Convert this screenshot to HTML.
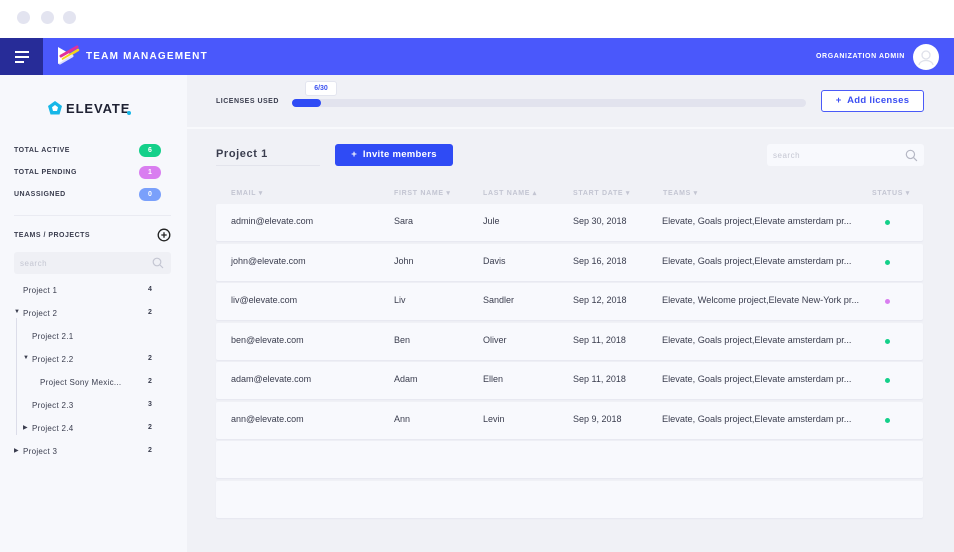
<!DOCTYPE html>
<html><head><meta charset="utf-8"><style>
*{box-sizing:border-box;margin:0;padding:0}
body{width:954px;height:552px;overflow:hidden;background:#fff;font-family:"Liberation Sans",sans-serif;position:relative;color:#3a3d4e}
.a{position:absolute}
.dot{position:absolute;top:11px;width:13px;height:13px;border-radius:50%;background:#e3e4f0}
.hdr{top:38px;left:0;width:954px;height:37px;background:#4a58fb}
.ham{top:38px;left:0;width:43px;height:37px;background:#272c98}
.side{top:75px;left:0;width:187px;height:477px;background:#f7f8fc}
.main{top:75px;left:187px;width:767px;height:477px;background:#f0f1f6}
.lbl{font-size:7px;font-weight:bold;letter-spacing:.5px;color:#3a3d4e}
.pill{width:22px;height:13px;border-radius:7px;color:#fff;font-size:7px;font-weight:bold;text-align:center;line-height:13px}
.tree{font-size:8px;color:#3a3d4e;letter-spacing:.3px}
.cnt{font-size:7px;font-weight:bold;color:#3a3d4e}
.th{font-size:7px;font-weight:bold;color:#c3c5d2;letter-spacing:.7px;top:189px}
.row{left:216px;width:707px;height:37px;background:#f8f9fd;border-radius:2px;box-shadow:0 1px 1px #e6e7f0}
.row span{position:absolute;top:12px;font-size:9px;color:#3a3d4e;white-space:nowrap}
.row span.t{font-size:9.2px}
.st{width:5px;height:5px;border-radius:50%;top:16px;left:669px}
</style></head><body>
<div class="dot" style="left:17px"></div><div class="dot" style="left:41px"></div><div class="dot" style="left:63px"></div>
<div class="a hdr"></div>
<div class="a ham"></div>
<div class="a" style="left:15px;top:51px;width:14px;height:2px;background:#fff"></div>
<div class="a" style="left:15px;top:56px;width:14px;height:2px;background:#fff"></div>
<div class="a" style="left:15px;top:61px;width:9px;height:2px;background:#fff"></div>
<svg class="a" style="left:55px;top:44px" width="26" height="24" viewBox="0 0 26 24"><path d="M3 3 L17 11 L3 20 Z" fill="#fff"/><path d="M6 12 L22 3" stroke="#e2319a" stroke-width="3" stroke-linecap="round"/><path d="M8 15 L23 6" stroke="#f5d31c" stroke-width="2.5" stroke-linecap="round"/><path d="M5 19 L17 12" stroke="#fff" stroke-width="3" stroke-linecap="round" opacity=".8"/></svg>
<div class="a" style="left:86px;top:51px;color:#fff;font-size:10px;font-weight:bold;letter-spacing:1.2px">TEAM MANAGEMENT</div>
<div class="a" style="left:816px;top:53px;color:#fff;font-size:7px;font-weight:bold;letter-spacing:.6px">ORGANIZATION ADMIN</div>
<div class="a" style="left:913px;top:44px;width:26px;height:26px;border-radius:50%;background:#fff"></div>
<svg class="a" style="left:917px;top:48px" width="18" height="18" viewBox="0 0 18 18"><circle cx="9" cy="7" r="4" fill="none" stroke="#dfe1ea" stroke-width="1.3"/><path d="M2 17 C3 11 15 11 16 17" fill="none" stroke="#dfe1ea" stroke-width="1.3"/></svg>

<div class="a side"></div>
<div class="a main"></div>
<div class="a" style="left:187px;top:127px;width:767px;height:2px;background:#f8f9fc"></div>

<svg class="a" style="left:47px;top:100px" width="16" height="16" viewBox="0 0 16 16"><path d="M8 1 L15 6 L12.5 14.5 L3.5 14.5 L1 6 Z" fill="#16b7e8"/><path d="M8 5 L11 7.3 L10 11 L6 11 L5 7.3 Z" fill="#fff"/></svg>
<div class="a" style="left:66px;top:101px;font-size:13px;font-weight:bold;letter-spacing:.9px;color:#1f2233">ELEVATE</div>
<div class="a" style="left:127px;top:111px;width:4px;height:4px;border-radius:50%;background:#16b7e8"></div>

<div class="a lbl" style="left:14px;top:147px">TOTAL ACTIVE</div>
<div class="a pill" style="left:139px;top:144px;background:#14d08a">6</div>
<div class="a lbl" style="left:14px;top:169px">TOTAL PENDING</div>
<div class="a pill" style="left:139px;top:166px;background:#d97ef0">1</div>
<div class="a lbl" style="left:14px;top:191px">UNASSIGNED</div>
<div class="a pill" style="left:139px;top:188px;background:#7aa0fb">0</div>
<div class="a" style="left:14px;top:215px;width:157px;height:1px;background:#eaebf2"></div>
<div class="a lbl" style="left:14px;top:232px;font-size:7px">TEAMS / PROJECTS</div>
<svg class="a" style="left:157px;top:228px" width="14" height="14" viewBox="0 0 14 14"><circle cx="7" cy="7" r="5.8" fill="none" stroke="#222" stroke-width="1.3"/><path d="M7 4.3V9.7M4.3 7H9.7" stroke="#222" stroke-width="1.3"/></svg>
<div class="a" style="left:14px;top:252px;width:157px;height:22px;background:#eff0f5;border-radius:3px"></div>
<div class="a" style="left:20px;top:259px;font-size:8px;color:#c4c6d2;letter-spacing:.5px">search</div>
<svg class="a" style="left:152px;top:257px" width="12" height="12" viewBox="0 0 12 12"><circle cx="5" cy="5" r="3.8" fill="none" stroke="#c4c6d2" stroke-width="1.2"/><path d="M8 8L11 11" stroke="#c4c6d2" stroke-width="1.2"/></svg>
<div class="a" style="left:16px;top:318px;width:1px;height:117px;background:#dcdde9"></div>
<div class="a tree" style="left:23px;top:286px">Project 1</div><div class="a cnt" style="left:148px;top:286px">4</div>
<div class="a tree" style="left:14px;top:309px;font-size:6px">▼</div><div class="a tree" style="left:23px;top:309px">Project 2</div><div class="a cnt" style="left:148px;top:309px">2</div>
<div class="a tree" style="left:32px;top:332px">Project 2.1</div>
<div class="a tree" style="left:23px;top:355px;font-size:6px">▼</div><div class="a tree" style="left:32px;top:355px">Project 2.2</div><div class="a cnt" style="left:148px;top:355px">2</div>
<div class="a tree" style="left:40px;top:378px">Project Sony Mexic...</div><div class="a cnt" style="left:148px;top:378px">2</div>
<div class="a tree" style="left:32px;top:401px">Project 2.3</div><div class="a cnt" style="left:148px;top:401px">3</div>
<div class="a tree" style="left:23px;top:424px;font-size:6px">▶</div><div class="a tree" style="left:32px;top:424px">Project 2.4</div><div class="a cnt" style="left:148px;top:424px">2</div>
<div class="a tree" style="left:14px;top:447px;font-size:6px">▶</div><div class="a tree" style="left:23px;top:447px">Project 3</div><div class="a cnt" style="left:148px;top:447px">2</div>

<div class="a lbl" style="left:216px;top:98px;font-size:7px">LICENSES USED</div>
<div class="a" style="left:292px;top:99px;width:514px;height:8px;border-radius:4px;background:#e2e3ee"></div>
<div class="a" style="left:292px;top:99px;width:29px;height:8px;border-radius:4px;background:#2f4bf5"></div>
<div class="a" style="left:305px;top:81px;width:32px;height:15px;background:#fff;border:1px solid #e3e5ef;border-radius:3px;font-size:7px;font-weight:bold;color:#3c52f0;text-align:center;line-height:13px">6/30</div>
<div class="a" style="left:821px;top:90px;width:103px;height:22px;border:1.3px solid #4a5af8;border-radius:3px;background:#fff;color:#3c4ff2;font-size:9.5px;font-weight:bold;text-align:center;line-height:20px;letter-spacing:.3px">+&nbsp; Add licenses</div>

<div class="a" style="left:216px;top:148px;font-size:11px;font-weight:bold;color:#3a3d4e;letter-spacing:.6px">Project 1</div>
<div class="a" style="left:216px;top:165px;width:104px;height:1px;background:#e3e4ec"></div>
<div class="a" style="left:335px;top:144px;width:118px;height:22px;background:#2f4bf5;border-radius:3px;color:#fff;font-size:9.5px;font-weight:bold;text-align:center;line-height:22px;letter-spacing:.3px">+&nbsp; Invite members</div>
<div class="a" style="left:767px;top:144px;width:157px;height:22px;background:#f8f9fd;border-radius:3px"></div>
<div class="a" style="left:773px;top:151px;font-size:8px;color:#c4c6d2;letter-spacing:.5px">search</div>
<svg class="a" style="left:905px;top:149px" width="13" height="13" viewBox="0 0 12 12"><circle cx="5" cy="5" r="3.8" fill="none" stroke="#b5b7c4" stroke-width="1.1"/><path d="M8 8L11 11" stroke="#b5b7c4" stroke-width="1.1"/></svg>

<div class="a th" style="left:231px">EMAIL ▾</div>
<div class="a th" style="left:394px">FIRST NAME ▾</div>
<div class="a th" style="left:483px">LAST NAME ▴</div>
<div class="a th" style="left:573px">START DATE ▾</div>
<div class="a th" style="left:663px">TEAMS ▾</div>
<div class="a th" style="left:872px">STATUS ▾</div>

<div class="a row" style="top:204px"><span style="left:15px">admin@elevate.com</span><span style="left:178px">Sara</span><span style="left:267px">Jule</span><span style="left:357px">Sep 30, 2018</span><span class="t" style="left:446px">Elevate, Goals project,Elevate amsterdam pr...</span><div class="a st" style="background:#14d08a"></div></div>
<div class="a row" style="top:243.5px"><span style="left:15px">john@elevate.com</span><span style="left:178px">John</span><span style="left:267px">Davis</span><span style="left:357px">Sep 16, 2018</span><span class="t" style="left:446px">Elevate, Goals project,Elevate amsterdam pr...</span><div class="a st" style="background:#14d08a"></div></div>
<div class="a row" style="top:283px"><span style="left:15px">liv@elevate.com</span><span style="left:178px">Liv</span><span style="left:267px">Sandler</span><span style="left:357px">Sep 12, 2018</span><span class="t" style="left:446px">Elevate, Welcome project,Elevate New-York pr...</span><div class="a st" style="background:#d97ef0"></div></div>
<div class="a row" style="top:322.5px"><span style="left:15px">ben@elevate.com</span><span style="left:178px">Ben</span><span style="left:267px">Oliver</span><span style="left:357px">Sep 11, 2018</span><span class="t" style="left:446px">Elevate, Goals project,Elevate amsterdam pr...</span><div class="a st" style="background:#14d08a"></div></div>
<div class="a row" style="top:362px"><span style="left:15px">adam@elevate.com</span><span style="left:178px">Adam</span><span style="left:267px">Ellen</span><span style="left:357px">Sep 11, 2018</span><span class="t" style="left:446px">Elevate, Goals project,Elevate amsterdam pr...</span><div class="a st" style="background:#14d08a"></div></div>
<div class="a row" style="top:401.5px"><span style="left:15px">ann@elevate.com</span><span style="left:178px">Ann</span><span style="left:267px">Levin</span><span style="left:357px">Sep 9, 2018</span><span class="t" style="left:446px">Elevate, Goals project,Elevate amsterdam pr...</span><div class="a st" style="background:#14d08a"></div></div>
<div class="a row" style="top:441px"></div>
<div class="a row" style="top:480.5px"></div>
</body></html>
